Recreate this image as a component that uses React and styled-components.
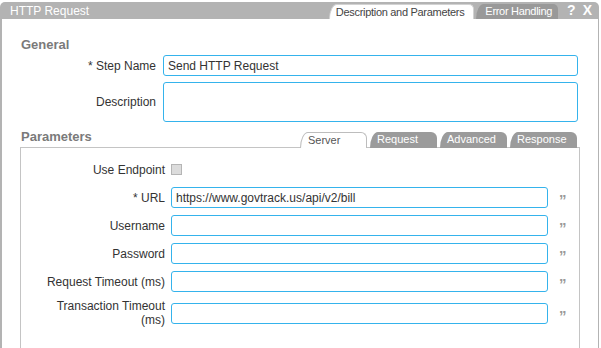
import React from "react";
import styled, { createGlobalStyle } from "styled-components";

const GlobalStyle = createGlobalStyle`
  html, body { margin: 0; padding: 0; overflow: hidden; background: #fff; }
  body {
    font-family: "Liberation Sans", Arial, sans-serif;
    font-size: 12px;
    color: #333;
  }
  * { box-sizing: border-box; }
`;

const Window = styled.div`
  width: 599px;
  padding-top: 2px;
  display: flex;
  flex-direction: column;
`;

const TitleBar = styled.div`
  height: 17px;
  background: #b3b3b3;
  border-radius: 5px 5px 0 0;
  display: flex;
  align-items: flex-end;
  padding: 0 7px 0 10px;
`;

const Title = styled.div`
  align-self: center;
  margin-right: auto;
  color: #fff;
  font-size: 12px;
  line-height: 17px;
  padding-top: 1px;
`;

const WindowTabs = styled.div`
  display: flex;
  gap: 2px;
  margin-right: 9px;
`;

const WindowTab = styled.div`
  height: 15px;
  line-height: 14px;
  font-size: 11px;
  letter-spacing: -0.3px;
  padding: 0 ${(p) => (p.$active ? "9px" : "6px")} 0 ${(p) => (p.$active ? "6px" : "9px")};
  border-top-left-radius: 8px 15px;
  border-top-right-radius: 5px;
  background: ${(p) => (p.$active ? "#fff" : "#999")};
  color: ${(p) => (p.$active ? "#444" : "#fff")};
  border: ${(p) => (p.$active ? "1px solid #d2d2d2" : "none")};
  border-bottom: none;
  white-space: nowrap;
`;

const Controls = styled.div`
  align-self: center;
  display: flex;
  gap: 7px;
  color: #fff;
  font-weight: bold;
  font-size: 14px;
  line-height: 17px;
`;

const Body = styled.div`
  border-left: 2px solid #b3b3b3;
  border-right: 1px solid #b3b3b3;
  padding: 18px 18px 0 18px;
  display: flex;
  flex-direction: column;
`;

const SectionTitle = styled.div`
  font-weight: bold;
  font-size: 13px;
  line-height: 16px;
  color: #7a7a7a;
  padding-left: 1px;
`;

const FormGrid = styled.div`
  display: grid;
  grid-template-columns: ${(p) => p.$cols};
  column-gap: ${(p) => p.$gap};
  row-gap: ${(p) => p.$rowGap};
  grid-auto-rows: ${(p) => p.$autoRows || "auto"};
  align-items: center;
  margin-top: ${(p) => p.$top || "0"};
`;

const Label = styled.label`
  text-align: right;
  line-height: 14px;
  font-size: 12px;
  color: #333;
`;

const TextInput = styled.input`
  width: 100%;
  height: 21px;
  border: 1px solid #35b3ec;
  border-radius: 3px;
  padding: 0 4px;
  font-family: "Liberation Sans", Arial, sans-serif;
  font-size: 12px;
  color: #333;
  background: #fff;
  outline: none;
`;

const TextArea = styled.textarea`
  width: 100%;
  height: 40px;
  border: 1px solid #35b3ec;
  border-radius: 3px;
  padding: 3px 4px;
  font-family: "Liberation Sans", Arial, sans-serif;
  font-size: 12px;
  resize: none;
  outline: none;
  display: block;
`;

const ParamsHeader = styled.div`
  margin-top: 7px;
  height: 18px;
  display: flex;
  justify-content: space-between;
  align-items: flex-start;
`;

const TabStrip = styled.div`
  align-self: flex-end;
  margin-bottom: -1px;
  margin-right: 3px;
  display: flex;
  gap: 3px;
  position: relative;
  z-index: 1;
`;

const ParamTab = styled.div`
  width: 67px;
  height: 16px;
  line-height: 15px;
  font-size: 11px;
  padding-left: 7px;
  border-top-left-radius: 8px 16px;
  border-top-right-radius: 6px;
  background: ${(p) => (p.$active ? "#fff" : "#9b9b9b")};
  color: ${(p) => (p.$active ? "#555" : "#fff")};
  border: ${(p) => (p.$active ? "1px solid #bdbdbd" : "none")};
  border-bottom: none;
`;

const Panel = styled.div`
  border: 1px solid #c4c4c4;
  border-bottom: none;
  padding: 11px 0 60px 16px;
`;

const Checkbox = styled.span`
  justify-self: start;
  width: 11px;
  height: 11px;
  background: #dcdcdc;
  border: 1px solid #b5b5b5;
`;

const Quote = styled.span`
  margin-left: 5px;
  margin-top: 4px;
  line-height: 17px;
  font-size: 15px;
  font-weight: bold;
  color: #999;
`;

const Empty = styled.span``;

const rows = [
  { label: "* URL", value: "https://www.govtrack.us/api/v2/bill" },
  { label: "Username", value: "" },
  { label: "Password", value: "" },
  { label: "Request Timeout (ms)", value: "" },
  { label: "Transaction Timeout (ms)", value: "" },
];

export default function App() {
  return (
    <>
      <GlobalStyle />
      <Window>
        <TitleBar>
          <Title>HTTP Request</Title>
          <WindowTabs>
            <WindowTab $active>Description and Parameters</WindowTab>
            <WindowTab>Error Handling</WindowTab>
          </WindowTabs>
          <Controls>
            <span>?</span>
            <span>X</span>
          </Controls>
        </TitleBar>
        <Body>
          <SectionTitle>General</SectionTitle>
          <FormGrid $cols="136px 415px" $gap="7px" $rowGap="6px" $top="2px">
            <Label>* Step Name</Label>
            <TextInput defaultValue="Send HTTP Request" />
            <Label>Description</Label>
            <TextArea defaultValue="" />
          </FormGrid>
          <ParamsHeader>
            <SectionTitle>Parameters</SectionTitle>
            <TabStrip>
              <ParamTab $active>Server</ParamTab>
              <ParamTab>Request</ParamTab>
              <ParamTab>Advanced</ParamTab>
              <ParamTab>Response</ParamTab>
            </TabStrip>
          </ParamsHeader>
          <Panel>
            <FormGrid
              $cols="128px 377px auto"
              $gap="6px"
              $rowGap="7px"
              $autoRows="minmax(21px, auto)"
            >
              <Label>Use Endpoint</Label>
              <Checkbox />
              <Empty />
              {rows.map((r) => (
                <React.Fragment key={r.label}>
                  <Label>{r.label}</Label>
                  <TextInput defaultValue={r.value} />
                  <Quote>”</Quote>
                </React.Fragment>
              ))}
            </FormGrid>
          </Panel>
        </Body>
      </Window>
    </>
  );
}
